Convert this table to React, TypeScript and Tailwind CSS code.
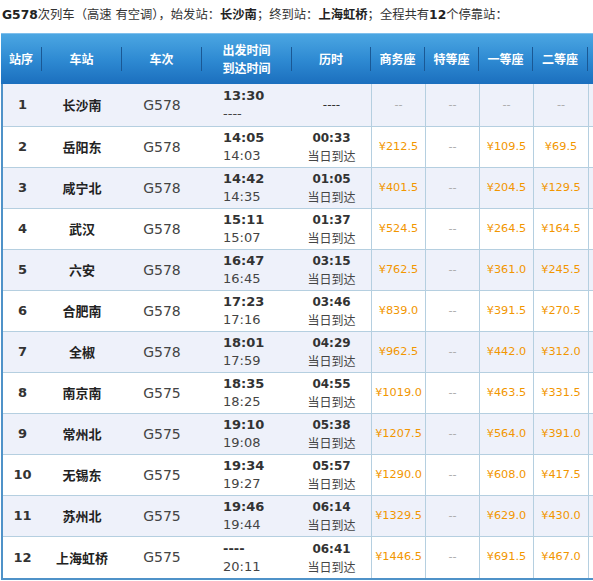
import React from 'react';

type Stop = {
  no: string;
  name: string;
  train: string;
  dep: string;
  arr: string;
  dur: string;
  day: string;
  prices: string[];
};

const STOPS: Stop[] = [
  { no: '1', name: '长沙南', train: 'G578', dep: '13:30', arr: '----', dur: '----', day: '', prices: ['--', '--', '--', '--'] },
  { no: '2', name: '岳阳东', train: 'G578', dep: '14:05', arr: '14:03', dur: '00:33', day: '当日到达', prices: ['¥212.5', '--', '¥109.5', '¥69.5'] },
  { no: '3', name: '咸宁北', train: 'G578', dep: '14:42', arr: '14:35', dur: '01:05', day: '当日到达', prices: ['¥401.5', '--', '¥204.5', '¥129.5'] },
  { no: '4', name: '武汉', train: 'G578', dep: '15:11', arr: '15:07', dur: '01:37', day: '当日到达', prices: ['¥524.5', '--', '¥264.5', '¥164.5'] },
  { no: '5', name: '六安', train: 'G578', dep: '16:47', arr: '16:45', dur: '03:15', day: '当日到达', prices: ['¥762.5', '--', '¥361.0', '¥245.5'] },
  { no: '6', name: '合肥南', train: 'G578', dep: '17:23', arr: '17:16', dur: '03:46', day: '当日到达', prices: ['¥839.0', '--', '¥391.5', '¥270.5'] },
  { no: '7', name: '全椒', train: 'G578', dep: '18:01', arr: '17:59', dur: '04:29', day: '当日到达', prices: ['¥962.5', '--', '¥442.0', '¥312.0'] },
  { no: '8', name: '南京南', train: 'G575', dep: '18:35', arr: '18:25', dur: '04:55', day: '当日到达', prices: ['¥1019.0', '--', '¥463.5', '¥331.5'] },
  { no: '9', name: '常州北', train: 'G575', dep: '19:10', arr: '19:08', dur: '05:38', day: '当日到达', prices: ['¥1207.5', '--', '¥564.0', '¥391.0'] },
  { no: '10', name: '无锡东', train: 'G575', dep: '19:34', arr: '19:27', dur: '05:57', day: '当日到达', prices: ['¥1290.0', '--', '¥608.0', '¥417.5'] },
  { no: '11', name: '苏州北', train: 'G575', dep: '19:46', arr: '19:44', dur: '06:14', day: '当日到达', prices: ['¥1329.5', '--', '¥629.0', '¥430.0'] },
  { no: '12', name: '上海虹桥', train: 'G575', dep: '----', arr: '20:11', dur: '06:41', day: '当日到达', prices: ['¥1446.5', '--', '¥691.5', '¥467.0'] },
];

const HEAD = [
  { w: 'w-[41px]', label: ['站序'] },
  { w: 'w-[80px]', label: ['车站'] },
  { w: 'w-[80px]', label: ['车次'] },
  { w: 'w-[90px]', label: ['出发时间', '到达时间'] },
  { w: 'w-[79px]', label: ['历时'] },
  { w: 'w-[54px]', label: ['商务座'] },
  { w: 'w-[54px]', label: ['特等座'] },
  { w: 'w-[54px]', label: ['一等座'] },
  { w: 'w-[55px]', label: ['二等座'] },
  { w: 'w-[60px]', label: [''] },
];

const PRICE_W = ['w-[54px]', 'w-[54px]', 'w-[54px]', 'w-[55px]', 'w-[60px]'];

const App: React.FC = () => {
  return (
    <div className="w-[593px] h-[581px] overflow-hidden bg-white font-['DejaVu_Sans','Noto_Sans_CJK_SC',sans-serif] text-[#333]">
      <div className="h-[33px] flex items-center pl-[2px] pb-[3px] text-[12.3px] whitespace-nowrap">
        <b className="text-[#222]">G578</b>次列车（高速 有空调），始发站：<b className="text-[#222]">长沙南</b>；终到站：
        <b className="text-[#222]">上海虹桥</b>；全程共有<b className="text-[#222]">12</b>个停靠站：
      </div>

      <div className="ml-px w-max">
        <div className="flex h-[51px] bg-gradient-to-b from-[#4ba6e2] via-[#2f8bd3] to-[#1b6fbe] border-t border-[#7fbfec]">
          {HEAD.map((h, i) => (
            <div key={i} className={`${h.w} flex items-center shrink-0`}>
              <div className="flex-1 flex flex-col items-center text-white font-bold text-[12px] font-['Noto_Sans_CJK_SC',sans-serif]">
                {h.label.map((l) => (
                  <span key={l} className="leading-[18px]">{l}</span>
                ))}
              </div>
              <div className="w-px h-[24px] bg-[#1a5894]" />
            </div>
          ))}
        </div>

        <div className="border-l-2 border-b-2 border-[#4f92c8]">
          {STOPS.map((s, i) => (
            <div
              key={s.no}
              className={`flex ${i === 0 ? 'h-[43px]' : 'h-[41px]'} ${i % 2 === 0 ? 'bg-[#eef1fa]' : 'bg-white'} ${i < STOPS.length - 1 ? 'border-b border-[#b5cfe0]' : ''}`}
            >
              <div className="w-[39px] shrink-0 flex items-center justify-center text-[13px] font-bold">{s.no}</div>
              <div className="w-[80px] shrink-0 flex items-center justify-center text-[13px] font-bold text-[#222] font-['Noto_Sans_CJK_SC',sans-serif]">
                {s.name}
              </div>
              <div className="w-[80px] shrink-0 flex items-center justify-center text-[14px] text-[#444]">{s.train}</div>
              <div className="w-[90px] shrink-0 flex flex-col justify-center pl-[21px] leading-[18px]">
                <span className="text-[13px] font-bold text-[#333]">{s.dep}</span>
                <span className="text-[13px] text-[#444]">{s.arr}</span>
              </div>
              <div className="w-[79px] shrink-0 flex flex-col items-center justify-center leading-[18px]">
                <span className={`text-[12px] text-[#333] ${s.day ? 'font-bold' : 'font-normal'}`}>{s.dur}</span>
                {s.day && <span className="text-[12px] text-[#444] font-['Noto_Sans_CJK_SC',sans-serif]">{s.day}</span>}
              </div>
              {[...s.prices, ''].map((p, j) => (
                <div
                  key={j}
                  className={`${PRICE_W[j]} shrink-0 flex items-center justify-center border-l border-[#b5cfe0] text-[11.3px] ${p === '--' ? 'text-[#aaa]' : 'text-[#f29600]'}`}
                >
                  {p}
                </div>
              ))}
            </div>
          ))}
        </div>
      </div>
    </div>
  );
};

export default App;
